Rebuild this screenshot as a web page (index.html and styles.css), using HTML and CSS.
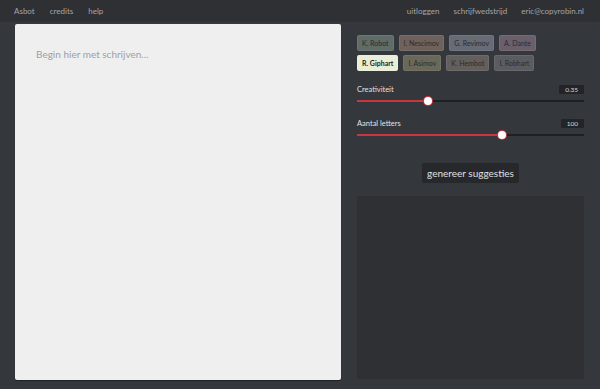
FILE: index.html
```html
<!DOCTYPE html>
<html lang="nl">
<head>
    <meta charset="UTF-8">
    <title>Asbot</title>
    <link rel="stylesheet" href="styles.css">
</head>
<body>
<div class="nav">
    <div class="nav-left">
        <a href="#">Asbot</a>
        <a href="#">credits</a>
        <a href="#">help</a>
    </div>
    <div class="nav-right">
        <a href="#">uitloggen</a>
        <a href="#">schrijfwedstrijd</a>
        <a href="#">eric@copyrobin.nl</a>
    </div>
</div>
<div class="main">
    <div class="editor">
        <div class="placeholder">Begin hier met schrijven...</div>
    </div>
    <div class="side">
        <div class="bots">
            <span class="bot robot">K. Robot</span>
            <span class="bot nescimov">I. Nescimov</span>
            <span class="bot revimov">G. Revimov</span>
            <span class="bot dante">A. Dante</span>
        </div>
        <div class="bots">
            <span class="bot giphart">R. Giphart</span>
            <span class="bot asimov">I. Asimov</span>
            <span class="bot hembot">K. Hembot</span>
            <span class="bot robhart">I. Robhart</span>
        </div>
        <div class="slider creativity">
            <div class="slider-head">
                <span>Creativiteit</span>
                <span class="val">0.35</span>
            </div>
            <div class="track">
                <div class="fill" style="width: 71px"></div>
                <div class="thumb" style="left: 71px"></div>
            </div>
        </div>
        <div class="slider letters">
            <div class="slider-head">
                <span>Aantal letters</span>
                <span class="val">100</span>
            </div>
            <div class="track">
                <div class="fill" style="width: 145px"></div>
                <div class="thumb" style="left: 145px"></div>
            </div>
        </div>
        <div class="gen-wrap">
            <button class="gen">genereer suggesties</button>
        </div>
        <div class="suggestions"></div>
    </div>
</div>
</body>
</html>
```

FILE: styles.css
```css
* {
    padding: 0;
    margin: 0;
    box-sizing: border-box;
}
body,html {
    width: 100%;
    height: 100%;
}
body {
    background-color: #34373b;
    font-family: Lato, "Open Sans", sans-serif;
    overflow: hidden;
}
.nav {
    height: 22px;
    display: flex;
    justify-content: space-between;
    align-items: center;
    padding: 0 16px 0 14px;
    background-color: #2e3034;
    font-size: 8px;
}
.nav a {
    color: #a3a6ab;
    text-decoration: none;
}
.nav-left {
    display: flex;
    gap: 15px;
}
.nav-right {
    display: flex;
    gap: 14px;
}
.main {
    display: flex;
    padding: 2px 0 0 15px;
    gap: 16px;
}
.editor {
    width: 326px;
    height: 356px;
    background-color: #efefef;
    border-radius: 2px;
    padding: 24px 21px;
    box-shadow: 0 1px 1px rgba(0,0,0,0.4);
}
.placeholder {
    color: #9b9fa7;
    font-size: 10px;
}
.side {
    width: 227px;
    padding-top: 11px;
}
.bots {
    display: flex;
    gap: 5px;
    margin-bottom: 4px;
}
.bot {
    height: 16px;
    line-height: 15px;
    padding: 0 4px;
    border-radius: 2px;
    font-size: 7px;
    color: #2a2b2c;
    border: 1px solid rgba(255,255,255,0.08);
}
.robot { background-color: #5f6c67; }
.nescimov { background-color: #6f625c; }
.revimov { background-color: #666b76; }
.dante { background-color: #6b5f6c; }
.giphart { background-color: #e9efd7; color: #1e1f20; font-weight: bold; }
.asimov { background-color: #6a6858; }
.hembot { background-color: #635f5d; }
.robhart { background-color: #5b5c61; }
.slider {
    margin-top: 13px;
}
.slider + .slider {
    margin-top: 16px;
}
.slider-head {
    display: flex;
    justify-content: space-between;
    align-items: center;
    font-size: 7.5px;
    color: #e2e2e2;
    height: 10px;
}
.val {
    background-color: #232427;
    color: #d8d8d8;
    font-size: 6.5px;
    padding: 1px 6px;
    border-radius: 1px;
}
.track {
    position: relative;
    height: 2px;
    margin-top: 6px;
    background-color: #1f2022;
}
.fill {
    height: 2px;
    background-color: #c8373d;
}
.thumb {
    position: absolute;
    top: -3px;
    width: 8px;
    height: 8px;
    margin-left: -4px;
    border-radius: 50%;
    background-color: #fff;
    box-shadow: 0 0 0 1px #c8373d;
}
.gen-wrap {
    display: flex;
    justify-content: center;
    margin-top: 27px;
}
.gen {
    background-color: #26282b;
    color: #e0e0e0;
    border: none;
    font-family: Lato, "Open Sans", sans-serif;
    font-size: 10px;
    height: 20px;
    padding: 0 5px;
    border-radius: 2px;
}
.suggestions {
    margin-top: 13px;
    height: 183px;
    background-color: #2e3034;
}
```
